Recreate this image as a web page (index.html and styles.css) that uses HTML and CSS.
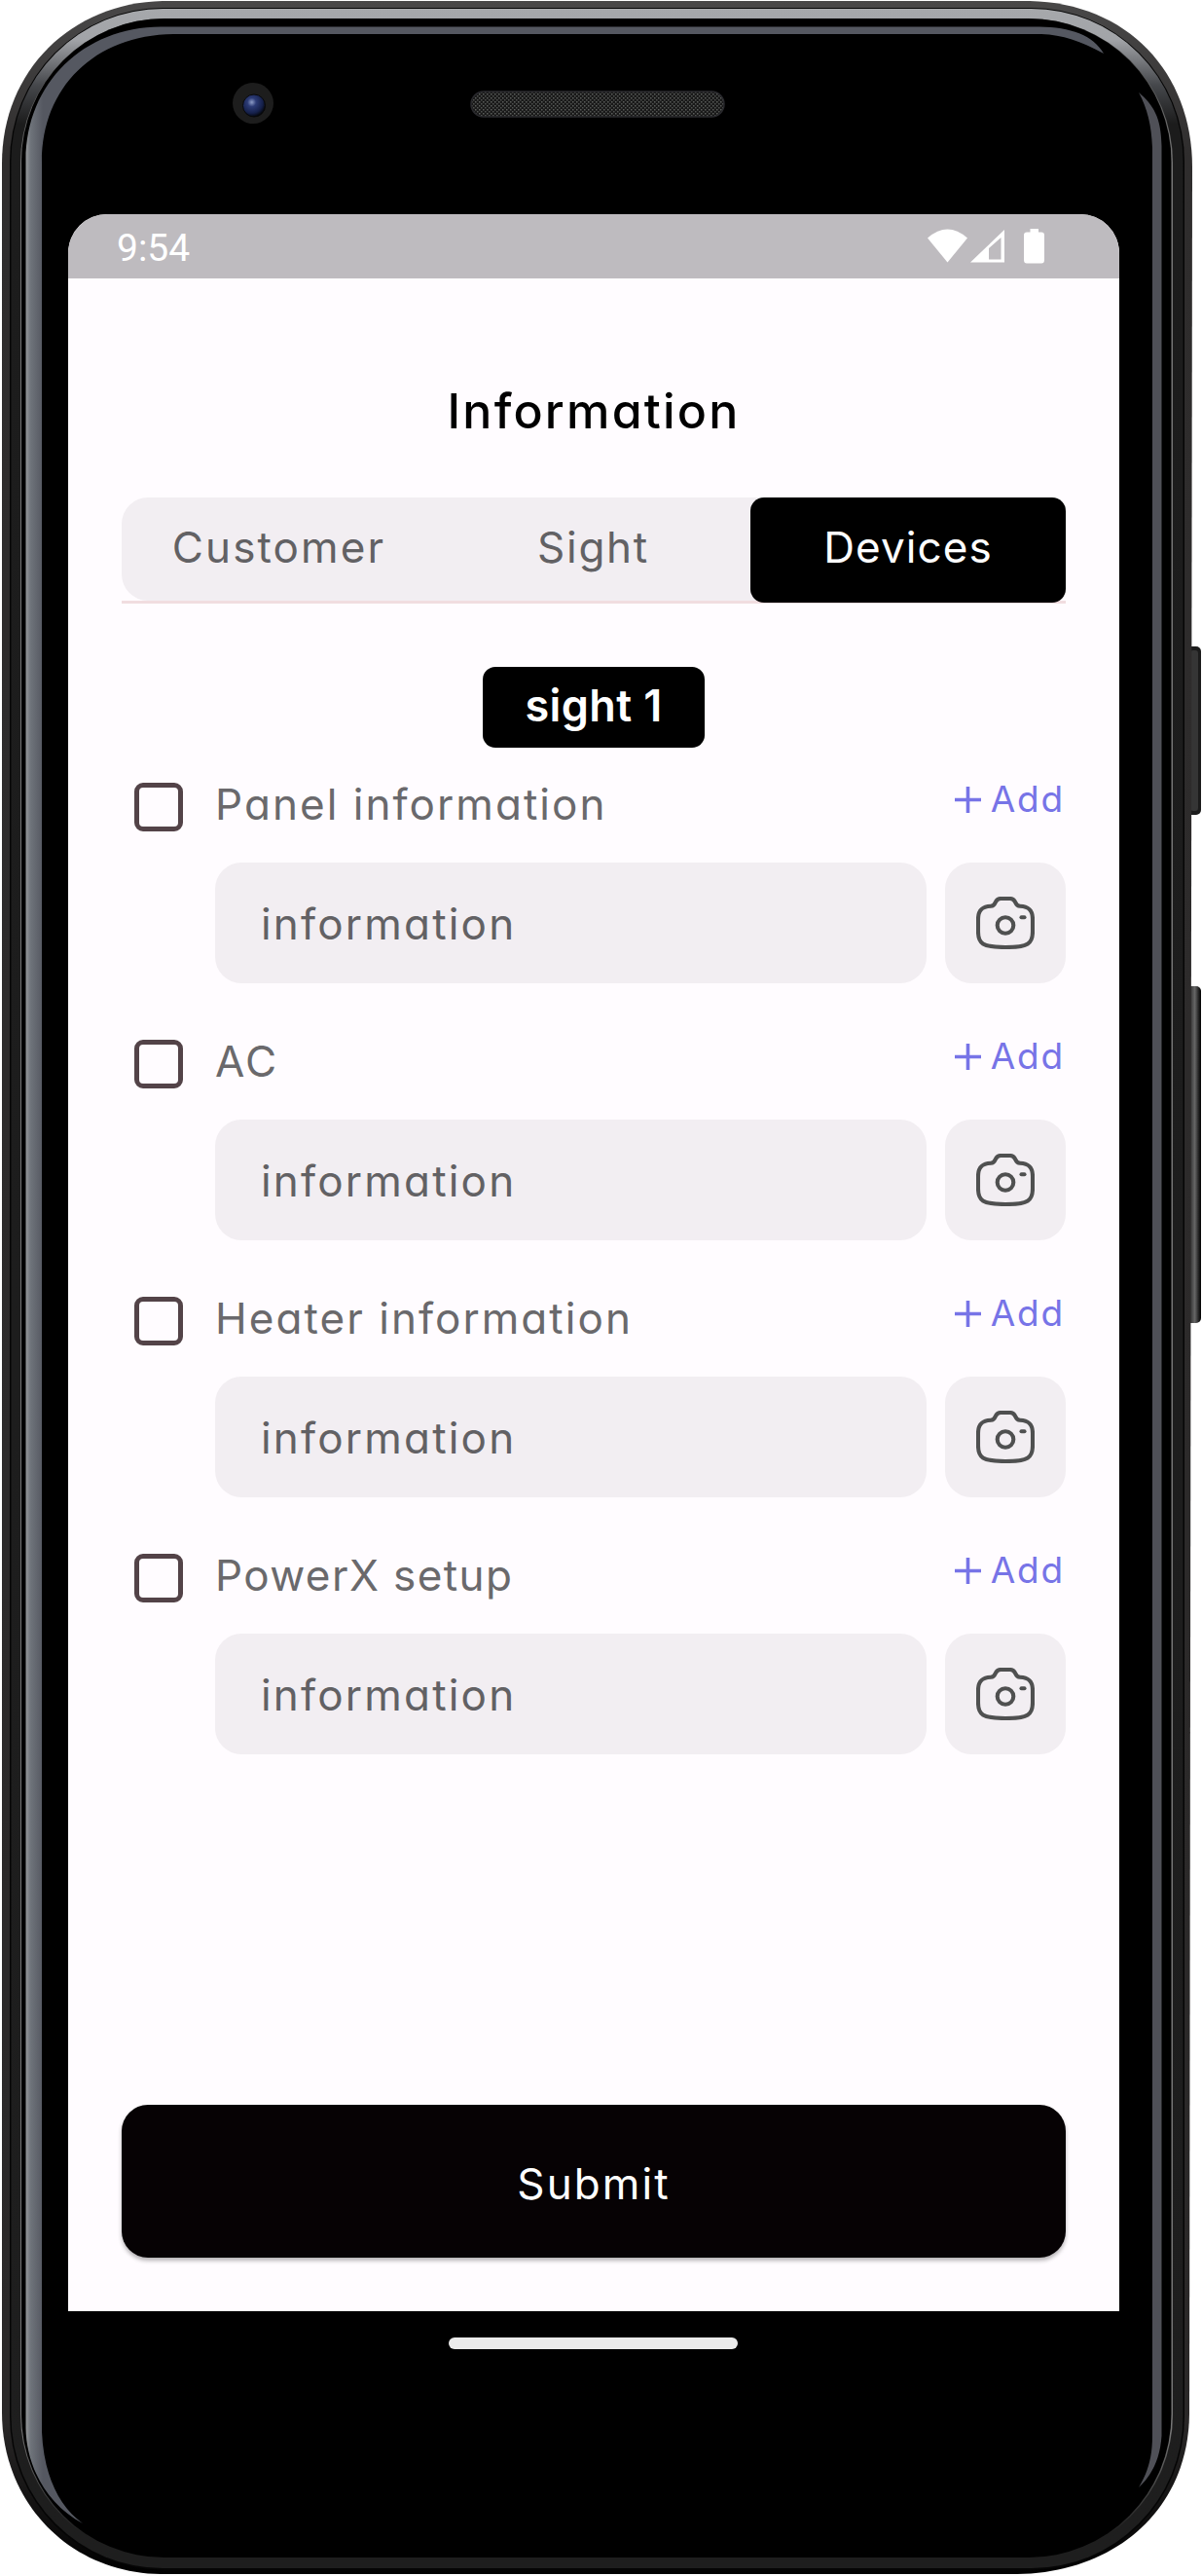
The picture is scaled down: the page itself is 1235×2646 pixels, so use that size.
FILE: index.html
```html
<!DOCTYPE html>
<html lang="en">
<head>
<meta charset="utf-8">
<title>Information</title>
<link rel="stylesheet" href="styles.css">
</head>
<body>
<svg width="0" height="0" class="defs" aria-hidden="true">
  <symbol id="camera" viewBox="0 0 60 54">
    <g fill="none" stroke="#4f5050" stroke-width="4.100" stroke-linecap="round" stroke-linejoin="round">
      <path d="M25 2H35C42 2 38.500 9.500 45 9.800C55 10.200 58 15 58 23V36C58 48 54 52 30 52S2 48 2 36V23C2 15 5 10.200 15 9.800C21.500 9.500 18 2 25 2Z"/>
      <circle cx="30" cy="29.500" r="8.300"/>
      <path d="M46.500 21.300H49.500"/>
    </g>
  </symbol>
  <symbol id="plus" viewBox="0 0 27 27">
    <path d="M13.500 0V27M0 13.500H27" stroke="#7774e7" stroke-width="3.600" fill="none"/>
  </symbol>
</svg>
<div class="phone">
  <svg class="frame" viewBox="0 0 1235 2646" aria-hidden="true">
    <defs>
      <linearGradient id="silver" x1="0" y1="0" x2="0" y2="1">
        <stop offset="0" stop-color="#a6a8ab"/><stop offset=".012" stop-color="#a2a4a8"/><stop offset=".03" stop-color="#45474b"/><stop offset=".045" stop-color="#1c1c1c"/><stop offset="1" stop-color="#1e1e1e"/>
      </linearGradient>
      <linearGradient id="edge" x1="0" y1="0" x2="0" y2="1">
        <stop offset="0" stop-color="#444"/><stop offset=".06" stop-color="#777"/><stop offset=".95" stop-color="#777"/><stop offset=".99" stop-color="#1e1e1e"/>
      </linearGradient>
      <linearGradient id="rim" x1="0" y1="0" x2="0" y2="1">
        <stop offset="0" stop-color="#494848"/><stop offset=".06" stop-color="#2f2d2d"/><stop offset=".94" stop-color="#2a2828"/><stop offset="1" stop-color="#000"/>
      </linearGradient>
      <linearGradient id="shine" gradientUnits="userSpaceOnUse" x1="26" y1="0" x2="44" y2="0">
        <stop offset="0" stop-color="#9a9c9e"/><stop offset=".3" stop-color="#6f747b"/><stop offset="1" stop-color="#555861"/>
      </linearGradient>
      <linearGradient id="key" x1="0" y1="0" x2="1" y2="0">
        <stop offset="0" stop-color="#111"/><stop offset=".3" stop-color="#333"/><stop offset=".6" stop-color="#666"/><stop offset=".85" stop-color="#222"/><stop offset="1" stop-color="#000"/>
      </linearGradient>
      <radialGradient id="lens" cx=".4" cy=".35" r=".65">
        <stop offset="0" stop-color="#8d9cc6"/><stop offset=".3" stop-color="#2c3b76"/><stop offset=".75" stop-color="#15204a"/><stop offset="1" stop-color="#05070d"/>
      </radialGradient>
      <pattern id="mesh" width="4" height="4" patternUnits="userSpaceOnUse">
        <rect width="4" height="4" fill="#191919"/><rect width="1.500" height="1.500" fill="#5c5f5c"/><rect x="2" y="2" width="1.500" height="1.500" fill="#505250"/>
      </pattern>
    </defs>
    <rect x="1218" y="664" width="16" height="173" rx="5" fill="#1b1b1b"/>
    <rect x="1223" y="668" width="8" height="165" rx="3" fill="#353535"/>
    <rect x="1218" y="1013" width="16" height="346" rx="5" fill="url(#key)"/>
    <path d="M167 1H1058C1158 3 1225 74 1225 172L1222 2480C1221 2578 1145 2643 1045 2644H165C72 2643 2 2571 2 2478V168C2 72 74 3 167 1Z" fill="url(#rim)"/>
    <rect x="10" y="8" width="1207" height="2632" rx="158" fill="#050505"/>
    <rect x="11.500" y="9" width="1204" height="2629" rx="156" fill="url(#silver)"/>
    <rect x="21" y="19" width="1184" height="2609" rx="148" fill="url(#edge)"/>
    <rect x="22" y="19" width="1181.500" height="2608" rx="147" fill="#000"/>
    <path d="M85 2592C47 2572 27 2532 26.500 2494V164C27 85 86 28 165 27.500H1068C1100 28 1123 36 1134 55C1110 42 1092 36 1070 35H178C97 36 43 90 43 166V2498C45 2542 60 2574 85 2592Z" fill="url(#shine)"/>
    <path d="M1170 95C1185 108 1193 120 1193.500 150V2502C1192 2525 1184 2542 1170 2555C1179 2540 1184 2525 1184 2502V152C1183 128 1179 112 1170 95Z" fill="#4f5057"/>
    <circle cx="260" cy="106" r="21" fill="#1d1d1d"/>
    <circle cx="261" cy="108.500" r="11.500" fill="url(#lens)" stroke="#090909"/>
    <rect x="484" y="94" width="260" height="26" rx="13" fill="url(#mesh)" stroke="#29292d" stroke-width="1.500"/>
  </svg>
  <main class="screen">
    <header class="status">
      <span class="clock">9:54</span>
      <svg class="signals" viewBox="0 0 122 36" aria-hidden="true" fill="#fff">
        <path d="M0 9.500Q20.500-8.500 41 9.500L20.500 34.500Z"/>
        <path d="M44 34.500L79 1V34.500ZM63 31.500H75.500V9L63 20Z" fill-rule="evenodd"/>
        <path d="M105.500 0H114V3.500H117Q120 3.500 120 6.500V32Q120 35.500 117 35.500H102Q99 35.500 99 32V6.500Q99 3.500 102 3.500H105.500Z"/>
      </svg>
    </header>
    <h1 class="title">Information</h1>
    <nav class="tabs">
      <span class="tab">Customer</span>
      <span class="tab tab-sight">Sight</span>
      <span class="tab tab-active">Devices</span>
    </nav>
    <div class="badge">sight 1</div>
    <section class="devices">
      <article class="device">
        <div class="row"><span class="check"></span><span class="label">Panel information</span><span class="add"><svg class="plus"><use href="#plus"/></svg>Add</span></div>
        <div class="entry"><div class="field">information</div><div class="photo"><svg class="camera"><use href="#camera"/></svg></div></div>
      </article>
      <article class="device">
        <div class="row"><span class="check"></span><span class="label">AC</span><span class="add"><svg class="plus"><use href="#plus"/></svg>Add</span></div>
        <div class="entry"><div class="field">information</div><div class="photo"><svg class="camera"><use href="#camera"/></svg></div></div>
      </article>
      <article class="device">
        <div class="row"><span class="check"></span><span class="label">Heater information</span><span class="add"><svg class="plus"><use href="#plus"/></svg>Add</span></div>
        <div class="entry"><div class="field">information</div><div class="photo"><svg class="camera"><use href="#camera"/></svg></div></div>
      </article>
      <article class="device">
        <div class="row"><span class="check"></span><span class="label label-power">PowerX setup</span><span class="add"><svg class="plus"><use href="#plus"/></svg>Add</span></div>
        <div class="entry"><div class="field">information</div><div class="photo"><svg class="camera"><use href="#camera"/></svg></div></div>
      </article>
    </section>
    <div class="submit">Submit</div>
  </main>
  <div class="home"></div>
</div>
</body>
</html>
```

FILE: styles.css
```css
* { box-sizing: border-box; }
body { margin: 0; background: #fff; font-family: Inter, "Open Sans", sans-serif; font-feature-settings: "cv11"; }
.defs { position: absolute; }
.phone { position: relative; width: 1235px; height: 2646px; overflow: hidden; padding: 220px 0 0 70px; }
.frame { position: absolute; left: 0; top: 0; width: 1235px; height: 2646px; }
.screen { position: relative; display: flex; flex-direction: column; width: 1080px; height: 2154px; padding-bottom: 55px; background: #fffcff; border-radius: 40px 40px 0 0; overflow: hidden; }
.status { display: flex; justify-content: space-between; height: 66px; padding: 15px 75px 0 50px; background: #bebbbf; color: #fff; }
.clock { padding-top: 1px; font: 39px/39px Roboto, sans-serif; }
.signals { width: 122px; height: 36px; }
.title { margin: 106px 0 0; height: 60px; font-size: 50px; line-height: 60px; font-weight: 500; text-align: center; letter-spacing: 2.2px; color: #000; }
.tabs { position: relative; display: grid; grid-template-columns: 323px 323px 324px; height: 109px; margin: 59px 55px 0; border-bottom: 3px solid #f1dde0; }
.tabs::before { content: ""; position: absolute; inset: 0; background: #f2eef2; border-radius: 27px; }
.tab { position: relative; height: 108px; line-height: 103px; text-align: center; font-size: 44px; letter-spacing: 2.1px; color: #626164; }
.tab-sight { letter-spacing: 1.7px; }
.tab-active { background: #000; color: #fff; border-radius: 14px; letter-spacing: 1.1px; }
.badge { align-self: center; width: 228px; height: 83px; margin-top: 65px; border-radius: 13px; background: #000; color: #fff; font-size: 45px; font-weight: 600; line-height: 80px; letter-spacing: .4px; text-align: center; }
.devices { margin: 21px 55px 0 68px; }
.device { height: 264px; }
.row { display: flex; height: 97px; }
.check { width: 50px; height: 50px; margin: 15px 1px 0 0; border: 5.500px solid #534348; border-radius: 9px; }
.label { flex: 1; margin-left: 32px; line-height: 75px; font-size: 44px; letter-spacing: 2.05px; color: #6a696c; white-space: nowrap; }
.label-power { letter-spacing: 1.4px; }
.add { display: flex; gap: 10px; height: 64px; line-height: 63px; padding-right: 1px; font-size: 37px; letter-spacing: 1.8px; color: #7774e7; }
.plus { width: 27px; height: 27px; margin-top: 18.500px; }
.entry { display: flex; gap: 19px; height: 124px; padding-left: 83px; }
.field { width: 731px; padding-left: 47px; border-radius: 27px; background: #f2eef2; color: #626164; font-size: 44px; line-height: 127px; letter-spacing: 2.2px; }
.photo { display: flex; justify-content: center; align-items: center; width: 124px; border-radius: 27px; background: #f2eef2; }
.camera { width: 60px; height: 54px; }
.submit { height: 157px; margin: auto 55px 0; border-radius: 27px; background: #060204; color: #fff; font-size: 44px; line-height: 162px; letter-spacing: 2.1px; text-align: center; box-shadow: 0 3px 4px rgba(0,0,0,.3); }
.home { position: relative; width: 297px; height: 12px; margin: 27px 0 0 391px; border-radius: 6px; background: #ebebeb; }
```
